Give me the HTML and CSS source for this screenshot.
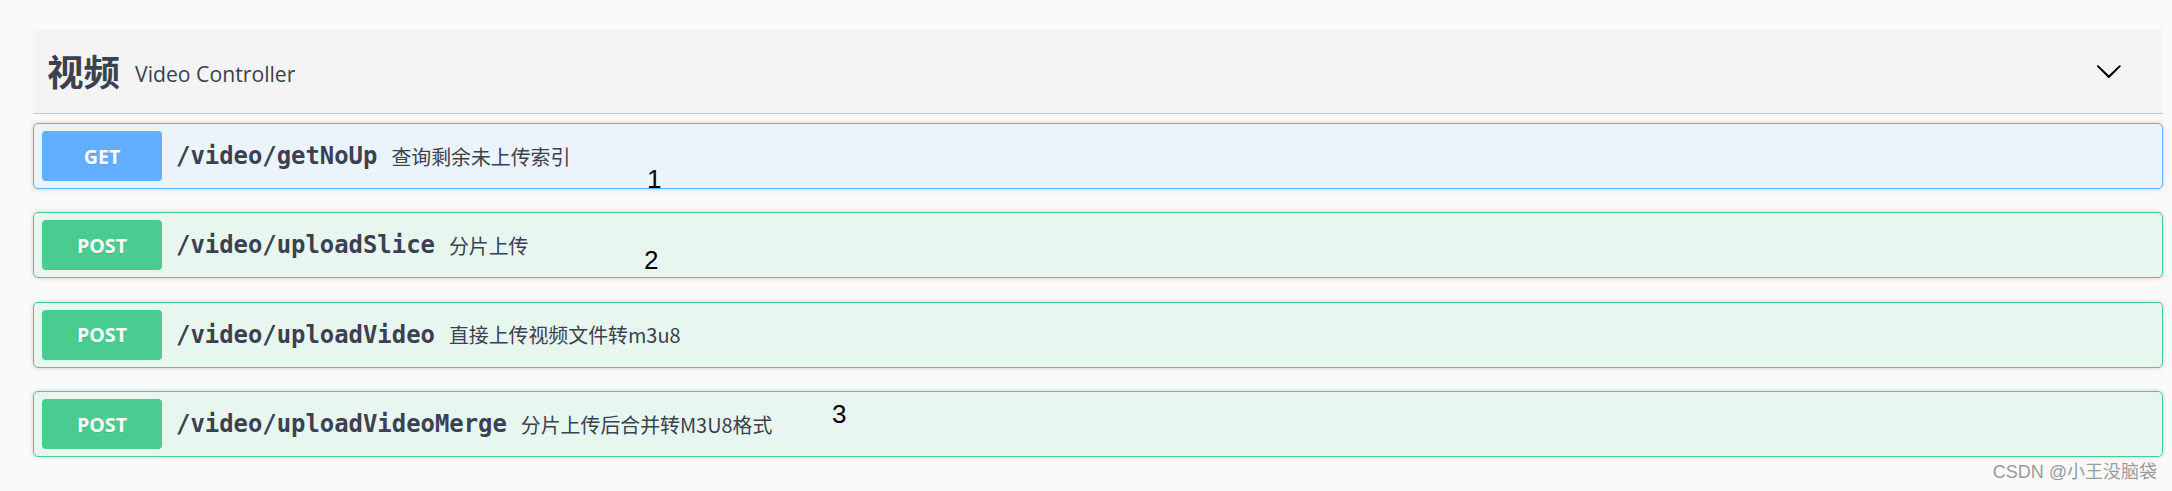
FILE: index.html
```html
<!DOCTYPE html>
<html lang="zh-CN">
<head>
<meta charset="utf-8">
<title>视频 Video Controller</title>
<link rel="stylesheet" href="styles.css">
</head>
<body>
<div class="page">
  <section class="tag-section">
    <div class="tag-header">
      <h4 class="tag-title"><span class="tag-name">视频</span><small class="tag-desc">Video Controller</small></h4>
      <svg class="arrow" viewBox="0 0 20 20" aria-hidden="true"><path d="M17.418 6.109c.272-.268.709-.268.979 0s.271.701 0 .969l-7.908 7.830c-.27.268-.707.268-.979 0l-7.908-7.83c-.27-.268-.27-.701 0-.969.271-.268.709-.268.979 0L10 13.25l7.418-7.141z"/></svg>
    </div>
    <div class="ops">
      <div class="op op-get"><span class="method">GET</span><span class="path">/video/getNoUp</span><span class="summary">查询剩余未上传索引</span></div>
      <div class="op op-post"><span class="method">POST</span><span class="path">/video/uploadSlice</span><span class="summary">分片上传</span></div>
      <div class="op op-post"><span class="method">POST</span><span class="path">/video/uploadVideo</span><span class="summary">直接上传视频文件转m3u8</span></div>
      <div class="op op-post"><span class="method">POST</span><span class="path">/video/uploadVideoMerge</span><span class="summary">分片上传后合并转M3U8格式</span></div>
    </div>
  </section>
  <span class="mark mark-1">1</span>
  <span class="mark mark-2">2</span>
  <span class="mark mark-3">3</span>
  <div class="watermark">CSDN @小王没脑袋</div>
</div>
</body>
</html>
```
FILE: styles.css
```css
html, body {
  margin: 0;
  background: #fafafa;
}

.page {
  position: relative;
  box-sizing: border-box;
  height: 491px;
  padding: 29px 9px 0 33px;
  font-family: "Open Sans", "Noto Sans CJK SC", sans-serif;
  color: #3b4151;
}

.tag-header {
  display: flex;
  align-items: center;
  justify-content: space-between;
  height: 84px;
  padding: 0 40px 0 14px;
  background: #f4f4f4;
  border-bottom: 1px solid #c6c7cb;
}

.tag-title {
  display: flex;
  align-items: center;
  margin: 0;
}

.tag-name {
  font-family: "Noto Sans CJK SC", sans-serif;
  font-size: 36.5px;
  font-weight: 700;
  line-height: 1;
  color: #3b4151;
}

.tag-desc {
  margin-left: 15px;
  font-family: "Open Sans", sans-serif;
  font-size: 21.2px;
  font-weight: 400;
  color: #3b4151;
  padding-top: 4px;
}

.arrow {
  width: 27.7px;
  height: 27.7px;
  fill: #000;
}

.ops {
  display: flex;
  flex-direction: column;
  gap: 23.4px;
  margin-top: 9px;
}

.op {
  display: flex;
  align-items: center;
  box-sizing: border-box;
  height: 66px;
  padding: 0 7px 0 8px;
  border: 1px solid;
  border-radius: 5px;
  box-shadow: 0 0 4px rgba(0, 0, 0, 0.19);
}

.op-get {
  background: #ebf3fb;
  border-color: #61affe;
}

.op-post {
  background: #e8f6f0;
  border-color: #49cc90;
}

.method {
  display: flex;
  align-items: center;
  justify-content: center;
  flex: none;
  width: 120px;
  height: 50px;
  border-radius: 4px;
  color: #fff;
  font-family: "Open Sans", sans-serif;
  font-size: 19.6px;
  font-weight: 700;
  text-shadow: 0 1px 0 rgba(0, 0, 0, 0.1);
}

.op-get .method { background: #61affe; }
.op-post .method { background: #49cc90; }

.path {
  padding: 0 14px;
  font-family: "DejaVu Sans Mono", monospace;
  font-size: 23.9px;
  font-weight: 700;
  color: #3b4151;
}

.summary {
  font-family: "Noto Sans CJK SC", sans-serif;
  font-size: 19.9px;
  color: #3b4151;
}

.mark {
  position: absolute;
  font-family: "Liberation Sans", Arial, sans-serif;
  font-size: 26px;
  line-height: 26px;
  color: #000;
}

.mark-1 { left: 647px; top: 166px; }
.mark-2 { left: 644px; top: 247px; }
.mark-3 { left: 832px; top: 401px; }

.watermark {
  position: absolute;
  right: 15px;
  top: 463px;
  font-family: "Liberation Sans", "Noto Sans CJK SC", sans-serif;
  font-size: 18px;
  line-height: 18px;
  color: #9a9a9a;
  text-shadow: 0 0 1px rgba(255, 255, 255, 0.8);
}
```
